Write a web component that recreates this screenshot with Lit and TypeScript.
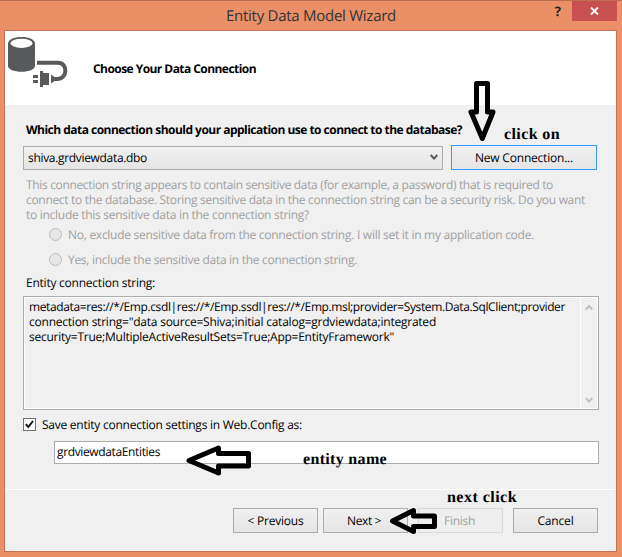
import { LitElement, html, css } from "lit";
import { customElement, property } from "lit/decorators.js";

/** One line of text whose tracking is adjusted to reach a set width. */
@customElement("fit-line")
class FitLine extends LitElement {
  @property({ type: Number }) width = 0;
  @property() text = "";

  static styles = css`
    :host { display: block; white-space: pre; }
    span { display: inline-block; vertical-align: top; }
  `;

  render() {
    return html`<span>${this.text}</span>`;
  }

  firstUpdated() {
    const span = this.renderRoot.querySelector("span")!;
    const natural = span.getBoundingClientRect().width;
    span.style.letterSpacing = `${(this.width - natural) / this.text.length}px`;
    this.style.width = `${this.width}px`;
  }
}

@customElement("app-root")
class AppRoot extends LitElement {
  static styles = css`
    * { box-sizing: border-box; }
    :host {
      display: block;
      position: relative;
      width: 622px;
      height: 557px;
      overflow: hidden;
      background: #ea8f68;
      border-top: 1px solid #bb6e50;
      font: 12px/15px "Open Sans", "Noto Sans", sans-serif;
      color: #000;
      text-rendering: geometricPrecision;
    }
    .titlebar { display: flex; height: 29px; align-items: flex-start; }
    .title { margin: 5px 0 0 226px; font-size: 15px; line-height: 21px; color: #333; }
    .help { margin-left: auto; padding: 3px 11px 0 0; font-weight: 700; font-size: 13px; color: #222; }
    .close { width: 45px; height: 20px; margin-right: 5px; background: #c75050; display: flex; align-items: center; justify-content: center; }
    .window { margin: 0 5px 0 4px; height: 522px; border: 1px solid #c57253; background: #f0f0f0; }
    .head { display: flex; height: 74px; background: #fff; }
    .head svg { display: block; width: 70px; height: 60px; }
    .head fit-line { margin: 30px 0 0 18px; }
    .bold { font-weight: 700; }
    .body { padding: 17px 17px 0 18px; height: 384px; }
    .ind { margin-left: 3px; }
    .row { display: flex; align-items: center; }
    .pick { margin-top: 8px; gap: 8px; }
    .combo {
      width: 420px; height: 24px; padding: 0 4px; justify-content: space-between;
      border: 1px solid #acacac; background: linear-gradient(#f0f0f0, #e5e5e5);
    }
    .btn {
      width: 85px; height: 25px; display: flex; align-items: center; justify-content: center;
      border: 1px solid #acacac; background: linear-gradient(#f0f0f0, #e5e5e5);
    }
    .new { width: 146px; border-color: #3399ff; }
    .off { color: #a0a0a0; }
    .btn.off { border-color: #d9d9d9; background: #efefef; }
    .note { margin-top: 7px; }
    .radio { margin: 5px 0 0 26px; gap: 6px; }
    .radio + .radio { margin-top: 10px; }
    .radio i { width: 13px; height: 13px; border: 1px solid #bcbcbc; border-radius: 50%; background: #e6e6e6; }
    .label { margin-top: 8px; }
    .memo {
      display: flex; justify-content: space-between; height: 114px; width: 576px; margin-top: 6px;
      border: 1px solid #acacac; outline: 1px solid #fff; outline-offset: -2px; padding-left: 5px;
    }
    .lines { padding-top: 2px; }
    .scroll {
      display: flex; flex-direction: column; justify-content: space-between; align-items: center;
      width: 18px; padding: 7px 1px 5px 0; border-left: 1px solid #fff;
    }
    svg { display: block; }
    .save { margin-top: 7px; gap: 6px; }
    .box { width: 13px; height: 13px; border: 1px solid #707070; background: #fff; }
    .field { width: 545px; height: 23px; margin: 9px 0 0 31px; padding: 2px 2px; border: 1px solid #acacac; background: #fff; }
    .foot { display: flex; justify-content: flex-end; border-top: 1px solid #fff; padding: 18px 18px 0 0; }
    .foot .btn { margin-left: 10px; }
    .foot .btn.next { margin-left: 5px; padding-right: 3px; }
    .foot .btn.off { padding-right: 2px; }
    .marks { position: absolute; left: 0; top: -1px; }
    .mark { position: absolute; font: 700 16px/18px "Liberation Serif", serif; }
    .click { left: 504px; top: 125px; }
    .name { left: 303px; top: 450px; }
    .nextclick { left: 447px; top: 488px; }
  `;

  render() {
    return html`
      <div class="titlebar">
        <fit-line class="title" width="170" text="Entity Data Model Wizard"></fit-line>
        <span class="help">?</span>
        <div class="close">
          <svg width="9" height="8" viewBox="0 0 9 8"><path d="M1 .5 8 7.5M8 .5 1 7.5" stroke="#fff" stroke-width="1.8" /></svg>
        </div>
      </div>
      <div class="window">
        <div class="head">
          <svg viewBox="5 31 70 60" fill="#58595b">
            <path d="M8 43.500V66c0 3.300 6 5.800 13.500 5.800S35 69.300 35 66V43.500C35 39.700 29 37 21.500 37S8 39.700 8 43.500Z" />
            <ellipse cx="21.500" cy="43.300" rx="11" ry="4.600" fill="#fff" />
            <path d="M37 62.800H58C68 62.800 68 79 57 79H53" fill="none" stroke="#58595b" stroke-width="4" />
            <path d="M51 74.500 54.500 77H58V81H54.500L51 83.500ZM40 71h3v2h6v12h-6v2h-3Z" />
            <path d="M33 75h5v3h-5ZM33 80h5v3h-5Z" />
          </svg>
          <fit-line class="bold" width="163" text="Choose Your Data Connection"></fit-line>
        </div>
        <div class="body">
          <fit-line class="bold ind" width="436" text="Which data connection should your application use to connect to the database?"></fit-line>
          <div class="row pick">
            <div class="row combo">
              <fit-line width="119" text="shiva.grdviewdata.dbo"></fit-line>
              <svg width="8" height="7" viewBox="0 0 8 7"><path d="M.7 1 4 4.600 7.300 1" fill="none" stroke="#555" stroke-width="2" /></svg>
            </div>
            <div class="btn new"><fit-line width="98" text="New Connection..."></fit-line></div>
          </div>
          <div class="note off ind">
            <fit-line width="527" text="This connection string appears to contain sensitive data (for example, a password) that is required to"></fit-line>
            <fit-line width="559" text="connect to the database. Storing sensitive data in the connection string can be a security risk. Do you want"></fit-line>
            <fit-line width="283" text="to include this sensitive data in the connection string?"></fit-line>
          </div>
          <div class="row radio off"><i></i><fit-line width="466" text="No, exclude sensitive data from the connection string. I will set it in my application code."></fit-line></div>
          <div class="row radio off"><i></i><fit-line width="289" text="Yes, include the sensitive data in the connection string."></fit-line></div>
          <fit-line class="label ind" width="129" text="Entity connection string:"></fit-line>
          <div class="memo">
            <div class="lines">
              <fit-line width="536" text="metadata=res://*/Emp.csdl|res://*/Emp.ssdl|res://*/Emp.msl;provider=System.Data.SqlClient;provider"></fit-line>
              <fit-line width="407" text='connection string="data source=Shiva;initial catalog=grdviewdata;integrated'></fit-line>
              <fit-line width="365" text='security=True;MultipleActiveResultSets=True;App=EntityFramework"'></fit-line>
            </div>
            <div class="scroll">
              <svg width="8" height="7" viewBox="0 0 8 7"><path d="M.7 5.500 4 2 7.300 5.500" fill="none" stroke="#bfbfbf" stroke-width="2" /></svg>
              <svg width="8" height="7" viewBox="0 0 8 7"><path d="M.7 1 4 4.600 7.300 1" fill="none" stroke="#bfbfbf" stroke-width="2" /></svg>
            </div>
          </div>
          <div class="row save">
            <div class="box"><svg width="11" height="11" viewBox="0 0 11 11"><path d="M1.800 5.200 4.300 8 9 2" fill="none" stroke="#111" stroke-width="2" /></svg></div>
            <fit-line width="260" text="Save entity connection settings in Web.Config as:"></fit-line>
          </div>
          <div class="field"><fit-line width="103" text="grdviewdataEntities"></fit-line></div>
        </div>
        <div class="foot">
          <div class="btn"><fit-line width="56" text="&lt; Previous"></fit-line></div>
          <div class="btn next"><fit-line width="34" text="Next &gt;"></fit-line></div>
          <div class="btn off"><fit-line width="31" text="Finish"></fit-line></div>
          <div class="btn"><fit-line width="36" text="Cancel"></fit-line></div>
        </div>
      </div>
      <svg class="marks" width="622" height="557" fill="none" stroke="#000" stroke-width="5" stroke-linejoin="round">
        <path d="M476.500 83.500H487.500V112H493L482.300 138.500 471 112H476.500Z" />
        <path d="M189 460.500 218.500 448V453.500H248.500V466H218.500V473Z" />
        <path d="M392.500 521 413.500 510.500V516H434.500V526.500H413.500V531.500Z" />
      </svg>
      <fit-line class="mark click" width="56" text="click on"></fit-line>
      <fit-line class="mark name" width="84" text="entity name"></fit-line>
      <fit-line class="mark nextclick" width="70" text="next click"></fit-line>
    `;
  }
}
